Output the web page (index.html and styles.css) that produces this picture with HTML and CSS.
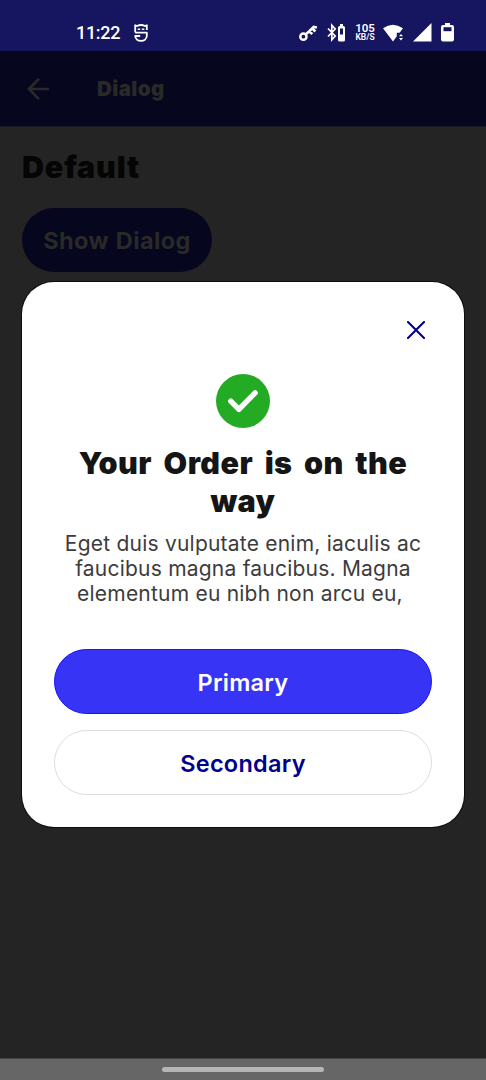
FILE: index.html
```html
<!DOCTYPE html>
<html lang="en">
<head>
<meta charset="utf-8">
<title>Dialog</title>
<link rel="stylesheet" href="styles.css">
</head>
<body>
<div class="screen">
  <header class="status">
    <span class="clock">11:22</span>
    <svg class="face" width="14" height="18" viewBox="0 0 14 18" fill="none" stroke="#fff" stroke-width="1.8"><path d="M1.200 8.600V1.200l1.800.8Q7 0 11 2l1.800-.8V6M1.200 8.600h11.600v3.400c-.5 6.600-11.100 6.600-11.600 0h5" stroke-linejoin="round"/><path d="M3.700 5.200h2.500M7.800 5.200h2.500" stroke-width="1.500"/></svg>
    <div class="indicators">
      <svg width="19" height="18" viewBox="0 0 19 18" fill="none" stroke="#fff"><circle cx="4.400" cy="12.700" r="3.100" stroke-width="2.500"/><path d="M6.800 10.400L10.500 7l4.200-4.100 3.200.7M10.300 7.200l3 2.900M13.400 4.600l3 2.900" stroke-width="2.600"/></svg>
      <svg class="bluetooth" width="18" height="19" viewBox="0 0 18 19" fill="none" stroke="#fff"><path d="M1 5.500l7.200 7.500-3.400 3.800V2.200L8.200 6 1 13.500" stroke-width="1.700"/><path d="M13 1h3v2h.5q1.500 0 1.500 1.500V17q0 1.500-1.500 1.500h-4Q11 18.500 11 17V4.500Q11 3 12.500 3h.5zM13 5.500v6h3v-6z" fill="#fff" fill-rule="evenodd" stroke="none"/></svg>
      <span class="speed"><b>105</b><small>KB/S</small></span>
      <svg class="wifi" width="21" height="18" viewBox="0 0 21 18" fill="#fff"><path d="M0 4.300Q9.700-3 20 4.300l-3.400 4.400h-2.800v3.500l-3.800 5.200z"/><path d="M16 12.300l2-2.200 2 2.200zM16 14.100h4l-2 2.300z"/></svg>
      <svg class="signal" width="19" height="19" viewBox="0 0 19 19" fill="#fff"><path d="M18.500 0v18.500H0z"/></svg>
      <svg class="battery" width="13" height="19" viewBox="0 0 13 19"><path d="M4 0h5v2h2q2 0 2 2v12.500q0 2-2 2H2q-2 0-2-2V4q0-2 2-2h2z" fill="#fff"/><path d="M2.500 4.200h8v4h-8z" fill="#151560"/></svg>
    </div>
  </header>
  <nav class="appbar">
    <svg width="22" height="22" viewBox="0 0 22 22" fill="none" stroke="#292927" stroke-width="2.700"><path d="M22 11H2M12 .9L1.900 11 12 21.100"/></svg>
    <span class="appbar-title">Dialog</span>
  </nav>
  <main class="page">
    <h1 class="heading">Default</h1>
    <button class="show"><span>Show Dialog</span></button>
  </main>
  <footer class="navigation"><i class="handle"></i></footer>
  <section class="dialog" role="dialog">
    <svg class="close" width="18" height="18" viewBox="0 0 18 18" stroke="#00008c" stroke-width="2.100" stroke-linecap="round"><path d="M1 1l16 16M17 1L1 17"/></svg>
    <svg class="success" width="54" height="54" viewBox="0 0 54 54"><circle cx="27" cy="27" r="27" fill="#24ab24"/><path d="M14.800 27.200l8.100 8.200 16.200-16.500" fill="none" stroke="#fff" stroke-width="5.400" stroke-linecap="round" stroke-linejoin="round"/></svg>
    <h2 class="title">Your Order is on the<br>way</h2>
    <p class="message">Eget duis vulputate enim, iaculis ac<br>faucibus magna faucibus. Magna<br>elementum eu nibh non arcu eu,&nbsp;</p>
    <button class="action primary"><span>Primary</span></button>
    <button class="action secondary"><span>Secondary</span></button>
  </section>
</div>
</body>
</html>
```
FILE: styles.css
```css
* { box-sizing: border-box; }
body { margin: 0; font-family: Inter, sans-serif; }
h1, h2, p { margin: 0; white-space: nowrap; }
svg { display: block; flex: none; }
button { font-family: inherit; border: 0; padding: 0; white-space: nowrap; }
.screen { position: relative; width: 486px; height: 1080px; background: #242424; display: flex; flex-direction: column; overflow: hidden; }
.status { height: 51px; flex: none; background: #151560; display: flex; align-items: flex-start; padding: 24px 32px 0 76px; color: #fff; font-family: Roboto, sans-serif; }
.clock { font-size: 18px; line-height: 18px; font-weight: 500; width: 58px; letter-spacing: -.3px; }
.indicators { display: flex; margin-left: auto; }
.bluetooth { margin-left: 9px; margin-top: -1px; }
.speed { width: 20px; margin: -1px 0 0 10px; display: flex; flex-direction: column; align-items: center; }
.speed b { font-size: 11.5px; line-height: 10px; font-weight: 600; }
.speed small { font-size: 8.5px; line-height: 8px; font-weight: 600; }
.wifi { margin-left: 8px; }
.signal { margin-left: 9px; margin-top: -1px; }
.battery { margin-left: 9px; margin-top: -1px; }
.appbar { height: 76px; flex: none; background: #06061f; border-bottom: 1px solid #1a1a22; display: flex; align-items: center; padding: 0 27px; color: #292927; }
.appbar-title { margin-left: 48px; font-size: 20.5px; font-weight: 900; letter-spacing: .4px; }
.page { flex: 1; padding: 21px 22px; }
.heading { font-size: 30.5px; line-height: 38px; font-weight: 900; color: #050505; letter-spacing: .8px; }
.show { display: block; margin-top: 22px; width: 190px; height: 64px; padding-top: 1px; border-radius: 32px; background: #06061f; color: #292927; font-size: 23.5px; font-weight: 700; letter-spacing: .4px; word-spacing: 1px; }
.navigation { height: 22px; background: #666; display: flex; justify-content: center; padding-top: 8px; border-top: 1px solid #444; }
.handle { width: 162px; height: 5px; border-radius: 3px; background: #b5b5b5; }
.dialog { position: absolute; left: 22px; top: 282px; width: 442px; height: 545px; border-radius: 32px; background: #fff; box-shadow: 0 0 0 1px #0c0c0c; display: flex; flex-direction: column; align-items: center; padding: 39px 32px 32px; text-align: center; }
.close { align-self: flex-end; margin-right: 7px; }
.success { margin-top: 35px; }
.title { margin-top: 16px; font-size: 30.5px; line-height: 38px; font-weight: 900; color: #151515; letter-spacing: .45px; word-spacing: 5px; }
.message { margin-top: 11px; font-size: 21px; line-height: 25px; color: #3c3c3c; letter-spacing: .22px; }
.action { width: 378px; height: 65px; flex: none; border-radius: 33px; padding-top: 1px; font-size: 23.5px; font-weight: 600; letter-spacing: .25px; }
.primary { margin-top: 43px; background: #3734f5; border: 1px solid #1712f5; color: #fff; }
.secondary { margin-top: 16px; background: #fff; border: 1px solid #ddd; color: #00008c; }
```
